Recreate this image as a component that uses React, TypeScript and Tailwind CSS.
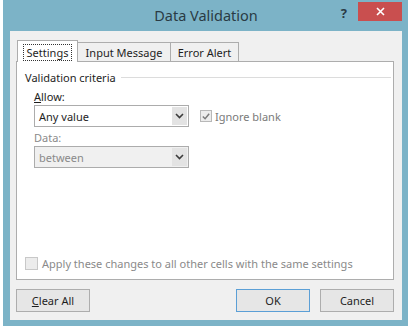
import React from 'react'

// Windows 8 style "Data Validation" dialog

const font = { fontFamily: '"Noto Sans", "Segoe UI", Arial, sans-serif' }

const Chevron: React.FC<{ color?: string }> = ({ color = '#3c3c3c' }) => (
  <svg width="9" height="6" viewBox="0 0 9 6">
    <path d="M1 1 L4.5 4.5 L8 1" fill="none" stroke={color} strokeWidth="1.6" />
  </svg>
)

const Check: React.FC = () => (
  <svg width="11" height="11" viewBox="0 0 11 11">
    <path d="M2 5.5 L4.5 8 L9 2.5" fill="none" stroke="#7a7a7a" strokeWidth="1.6" />
  </svg>
)

const Select: React.FC<{ value: string; disabled?: boolean }> = ({ value, disabled }) => (
  <div
    className={`flex h-[22px] w-[155px] items-stretch border border-[#acacac] ${
      disabled ? 'bg-[#f0f0f0]' : 'bg-white'
    }`}
  >
    <div className={`flex flex-1 items-center pl-[4px] ${disabled ? 'text-[#8a8a8a]' : 'text-[#1e1e1e]'}`}>
      {value}
    </div>
    <div className="m-[1px] flex w-[15px] items-center justify-center bg-[#e3e3e3]">
      <Chevron />
    </div>
  </div>
)

const DialogButton: React.FC<{ label: React.ReactNode; primary?: boolean; className?: string }> = ({
  label,
  primary,
  className = '',
}) => (
  <div
    className={`flex h-[23px] w-[74px] items-center justify-center bg-[#e6e6e6] text-[#1e1e1e] border ${
      primary ? 'border-[#5b9fd6]' : 'border-[#adadad]'
    } ${className}`}
  >
    {label}
  </div>
)

export default function App() {
  return (
    <div className="h-[329px] w-[410px] overflow-hidden bg-white text-[11px] leading-none" style={font}>
      <div className="ml-[3px] flex h-[326px] w-[405px] flex-col bg-[#7cb3c7] pl-[7px] pr-[6px] pb-[6px]">
        {/* Title bar */}
        <div className="relative flex h-[31px] shrink-0 items-center justify-center">
          <span className="text-[14.5px] text-[#2a3b44]">Data Validation</span>
          <span className="absolute right-[55px] top-[7px] text-[13px] font-bold text-[#2a3b44]">?</span>
          <div className="absolute right-0 top-[2px] flex h-[19px] w-[44px] items-center justify-center bg-[#c94f4f]">
            <svg width="9" height="9" viewBox="0 0 9 9">
              <path d="M1 1 L8 8 M8 1 L1 8" stroke="white" strokeWidth="1.6" />
            </svg>
          </div>
        </div>

        {/* Client area */}
        <div className="flex flex-1 flex-col bg-[#f0f0f0] pl-[6px] pr-[8px] pt-[9px]">
          {/* Tabs */}
          <div className="flex h-[21px] items-end pl-[1px]">
            <div className="relative z-10 mb-[-1px] flex h-[22px] w-[61px] items-start justify-center border border-b-0 border-[#adadad] bg-white pt-[3px]">
              <span className="border border-dotted border-[#333] px-[3px] pb-[2px] pt-[2px] text-[#1e1e1e]">Settings</span>
            </div>
            <div className="flex h-[19px] w-[93px] items-center justify-center border border-l-0 border-b-0 border-[#adadad] bg-[#f0f0f0] text-[#1e1e1e]">
              Input Message
            </div>
            <div className="flex h-[19px] w-[68px] items-center justify-center border border-l-0 border-b-0 border-[#adadad] bg-[#f0f0f0] text-[#1e1e1e]">
              Error Alert
            </div>
          </div>

          {/* Tab panel */}
          <div className="flex h-[219px] flex-col border border-[#adadad] bg-white pl-[8px] pr-[2px] pt-[10px]">
            <div className="flex items-center gap-[5px]">
              <span className="text-[#1e1e1e]">Validation criteria</span>
              <div className="h-px flex-1 bg-[#dcdcdc]" />
            </div>

            <div className="mt-[8px] pl-[9px]">
              <div className="text-[#1e1e1e]">
                <span className="underline">A</span>llow:
              </div>
              <div className="mt-[3px] flex items-center">
                <Select value="Any value" />
                <div className="ml-[11px] flex h-[12px] w-[12px] items-center justify-center border border-[#b8b8b8] bg-[#ececec]">
                  <Check />
                </div>
                <span className="ml-[3px] text-[#7a7a7a]">Ignore blank</span>
              </div>
              <div className="mt-[5px] text-[#8a8a8a]">Data:</div>
              <div className="mt-[3px]">
                <Select value="between" disabled />
              </div>
            </div>

            <div className="mt-auto mb-[9px] flex items-center">
              <div className="h-[13px] w-[13px] border border-[#c8c8c8] bg-[#ececec]" />
              <span className="ml-[4px] text-[#8a8a8a]">Apply these changes to all other cells with the same settings</span>
            </div>
          </div>

          {/* Buttons */}
          <div className="mt-[9px] flex items-center">
            <DialogButton
              label={
                <span>
                  <span className="underline">C</span>lear All
                </span>
              }
            />
            <DialogButton label="OK" primary className="ml-auto" />
            <DialogButton label="Cancel" className="ml-[10px]" />
          </div>
        </div>
      </div>
    </div>
  )
}
